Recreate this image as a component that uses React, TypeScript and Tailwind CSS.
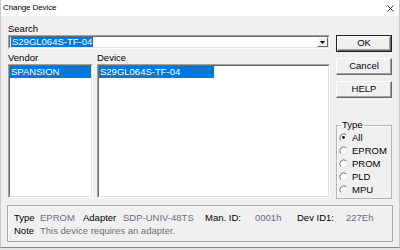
import React from 'react';

const FONT = "font-['Liberation_Sans',Arial,sans-serif]";

function Radio({ label, checked }: { label: string; checked?: boolean }) {
  return (
    <div className="flex h-[13px] items-center pl-[2px]">
      <svg width="9" height="9" viewBox="0 0 9 9" className="shrink-0">
        <circle cx="4.5" cy="4.5" r="4" fill="#fff" stroke="#e3e3e3" />
        <path d="M1.7 7.3 A4 4 0 0 1 7.3 1.7" stroke="#7a7a7a" fill="none" />
        {checked && <circle cx="4.5" cy="4.5" r="1.4" fill="#000" />}
      </svg>
      <span className="ml-[4px] leading-[13px]">{label}</span>
    </div>
  );
}

function Button({ label, isDefault }: { label: string; isDefault?: boolean }) {
  const face = (
    <div className="flex h-full w-full items-center justify-center border border-t-white border-l-white border-b-[#696969] border-r-[#696969] bg-[#f0f0f0] shadow-[inset_-1px_-1px_0_#a0a0a0]">
      {label}
    </div>
  );
  if (isDefault) {
    return <div className="h-[17px] w-[56px] border border-[#1e1e1e]">{face}</div>;
  }
  return <div className="h-[17px] w-[56px]">{face}</div>;
}

function Sunken({ className, children }: { className?: string; children?: React.ReactNode }) {
  return (
    <div className={`border border-t-[#a0a0a0] border-l-[#a0a0a0] border-b-white border-r-white ${className ?? ''}`}>
      <div className="h-full w-full border border-t-[#696969] border-l-[#696969] border-b-[#e3e3e3] border-r-[#e3e3e3] bg-white overflow-hidden">
        {children}
      </div>
    </div>
  );
}

export default function App() {
  return (
    <div className={`h-[250px] w-[400px] bg-[#e4e4e4] text-[9.5px] text-black ${FONT}`}>
      <div className="flex h-[248px] w-[400px] flex-col border-b border-l border-r border-b-[#8a8a8a] border-l-[#c8c8c8] border-r-[#c8c8c8] bg-[#f0f0f0]">
        {/* title bar */}
        <div className="flex h-[16px] shrink-0 items-center justify-between bg-white pl-[2px] pr-[5px]">
          <span className="text-[8px] tracking-[-0.1px]">Change Device</span>
          <svg width="7" height="7" viewBox="0 0 7 7">
            <path d="M0.5 0.5 L6.5 6.5 M6.5 0.5 L0.5 6.5" stroke="#222" strokeWidth="0.9" />
          </svg>
        </div>

        <div className="flex flex-1 flex-col pl-[6px] pr-[6px] pt-[6px]">
          <div className="flex h-[176px]">
            {/* left column */}
            <div className="ml-[1px] flex w-[322px] flex-col">
              <div className="h-[13px] leading-[13px]">Search</div>
              <Sunken className="h-[14px]">
                <div className="flex h-full items-center justify-between pl-[1px]">
                  <span className="bg-[#0078d7] px-[1px] leading-[10px] text-white">S29GL064S-TF-04</span>
                  <div className="flex h-full w-[11px] items-center justify-center border border-t-white border-l-white border-b-[#696969] border-r-[#696969] bg-[#f0f0f0]">
                    <svg width="5" height="3" viewBox="0 0 5 3">
                      <path d="M0 0 H5 L2.5 3 Z" fill="#000" />
                    </svg>
                  </div>
                </div>
              </Sunken>
              <div className="mt-[3px] flex h-[12px] leading-[12px]">
                <span className="w-[89px]">Vendor</span>
                <span>Device</span>
              </div>
              <div className="flex h-[134px] gap-[4px]">
                <Sunken className="h-full w-[85px]">
                  <div className="h-[12px] bg-[#0078d7] pl-[1px] leading-[12px] text-white">SPANSION</div>
                </Sunken>
                <Sunken className="h-full flex-1">
                  <div className="h-[12px] w-[115px] bg-[#0078d7] pl-[1px] leading-[12px] text-white">S29GL064S-TF-04</div>
                </Sunken>
              </div>
            </div>

            {/* right column */}
            <div className="ml-[6px] flex w-[56px] flex-col">
              <div className="mt-[13px]">
                <Button label="OK" isDefault />
              </div>
              <div className="mt-[6px]">
                <Button label="Cancel" />
              </div>
              <div className="mt-[6px]">
                <Button label="HELP" />
              </div>
              <fieldset className="mt-[21px] h-[80px] border border-[#b4b4b4] pb-[2px] shadow-[inset_1px_1px_0_#fff]">
                <legend className="ml-[4px] h-[12px] px-[1px] leading-[12px]">Type</legend>
                <Radio label="All" checked />
                <Radio label="EPROM" />
                <Radio label="PROM" />
                <Radio label="PLD" />
                <Radio label="MPU" />
              </fieldset>
            </div>
          </div>

          {/* info panel */}
          <div className="mt-[7px] h-[37px] border border-[#a8a8a8] pl-[6px] pt-[6px] shadow-[inset_1px_1px_0_#fff]">
            <div className="flex h-[13px] items-center">
              <span className="w-[26px]">Type</span>
              <span className="w-[43px] text-[#6b6f78]">EPROM</span>
              <span className="w-[40px]">Adapter</span>
              <span className="w-[82px] text-[#6b6f78]">SDP-UNIV-48TS</span>
              <span className="w-[50px]">Man. ID:</span>
              <span className="w-[42px] text-[#6b6f78]">0001h</span>
              <span className="w-[49px]">Dev ID1:</span>
              <span className="text-[#6b6f78]">227Eh</span>
            </div>
            <div className="flex h-[13px] items-center">
              <span className="w-[26px]">Note</span>
              <span className="text-[#6b6f78]">This device requires an adapter.</span>
            </div>
          </div>
        </div>
      </div>
    </div>
  );
}
